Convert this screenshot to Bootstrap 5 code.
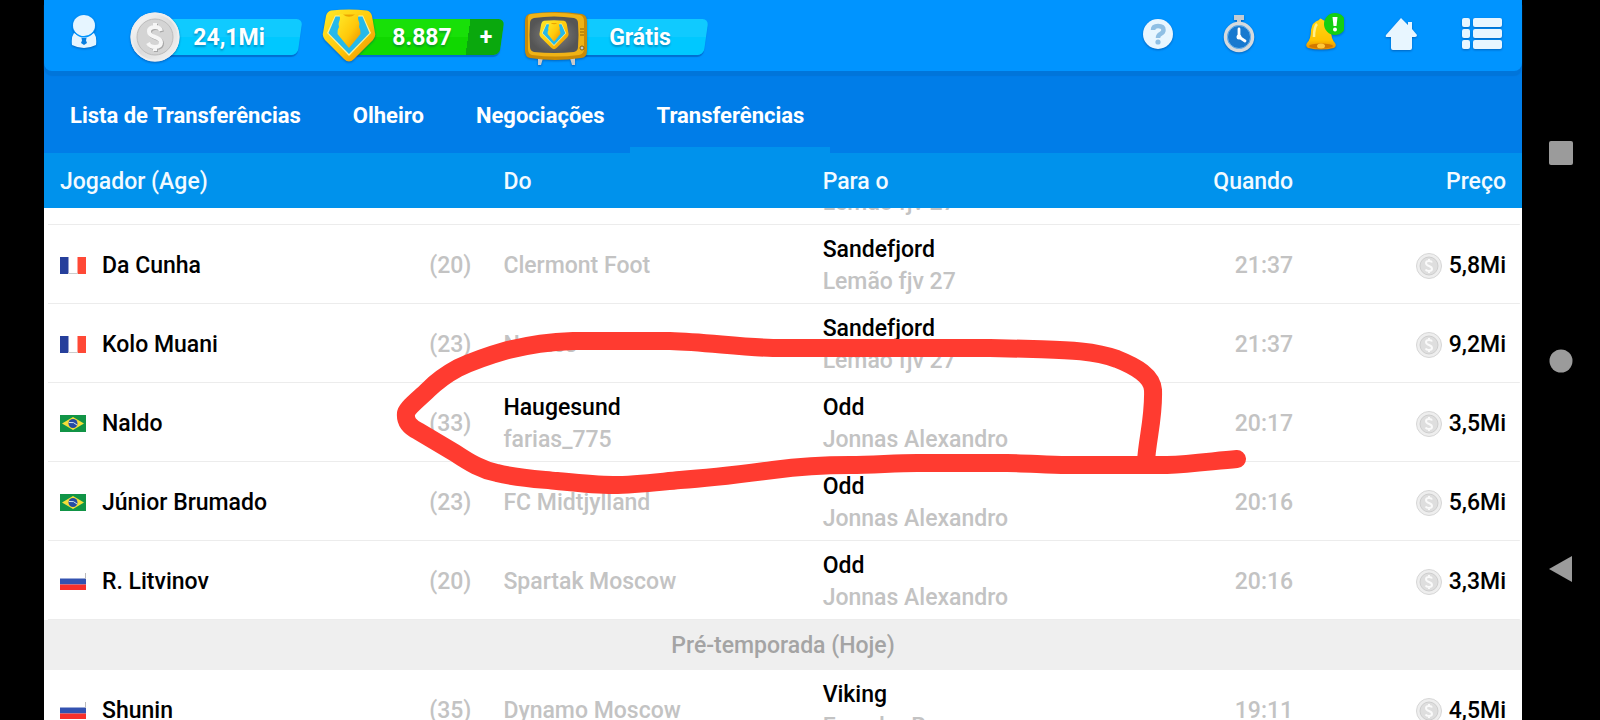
<!DOCTYPE html>
<html lang="pt-BR">
<head>
<meta charset="utf-8">
<meta name="viewport" content="width=device-width, initial-scale=1">
<title>Transferências</title>
<link rel="stylesheet" href="https://cdn.jsdelivr.net/npm/bootstrap@5.3.0/dist/css/bootstrap.min.css">
<style>
  body { font-family: Roboto, "Liberation Sans", sans-serif; font-size: 23px; font-weight: 500; background: #000; color: #000; }
  button { font-family: inherit; }
  .screen { padding-left: 44px; }
  .app { background: #fff; min-width: 0; }
  .tabs-area { background: #007de8; }
  .topbar { height: 71px; background: #0094ff; border-radius: 0 0 8px 8px; box-shadow: 0 5px 1px #0075da; margin-bottom: 6px; padding-left: 27px; }
  .plain { background: none; border: 0; padding: 0; color: inherit; }
  .profile { height: 64px; }
  .topbar svg { display: block; filter: drop-shadow(0 1px 1px rgba(0, 40, 110, .45)); }
  .wallet { gap: 20px; margin-left: 33px; }
  .pill { position: relative; height: 56px; color: #fff; font-weight: 700; text-shadow: 0 2px 2px rgba(0, 50, 100, .35); isolation: isolate; }
  .pill::before { content: ""; position: absolute; z-index: -1; left: 28px; right: 2px; top: 11px; height: 36px; background: var(--fill); border-radius: 0 6px 6px 0; transform: skewX(-8deg); box-shadow: 0 2px 1px rgba(0, 80, 170, .55); }
  .pill-cyan { --fill: linear-gradient(#10caff 50%, #00c8ff 50%); }
  .pill-green { --fill: linear-gradient(90deg, transparent calc(100% - 34px), #0aa80d 0), linear-gradient(#18e008 50%, #10d800 50%); }
  .pill-coins { width: 172px; }
  .pill-crest { width: 182px; }
  .pill-free { width: 184px; }
  .pill-text { flex: 1; text-align: center; line-height: 36px; }
  .pill-plus { width: 36px; line-height: 36px; }
  .tool { width: 81px; height: 68px; display: flex; align-items: center; justify-content: center; }
  .tab-link { display: block; height: 76px; padding: 0 26px; border-bottom: 6px solid transparent; color: #fff; font-size: 22px; font-weight: 700; line-height: 78px; text-decoration: none; }
  .tab-link.active { border-bottom-color: #0092ec; }
  .list-scroll { overflow-y: auto; scrollbar-width: none; min-height: 0; flex: 1 1 0; }
  .list-scroll::-webkit-scrollbar { display: none; }
  .transfers { width: 100%; table-layout: fixed; border-collapse: separate; border-spacing: 0; }
  .transfers th { height: 55px; padding: 4px 16px 0; background: #0092ec; color: #f2faff; font-weight: 500; }
  .transfers td { height: 79px; padding: 2px 16px 0; line-height: 32px; white-space: nowrap; }
  .transfers tbody tr { background: linear-gradient(#ececec, #ececec) 4px 100% / calc(100% - 6px) 1px no-repeat; }
  .transfers tbody tr.season { background: #efefef; }
  .transfers .season td { height: 50px; color: #a4a4a4; text-align: center; }
  .w-player { width: 30%; } .w-from { width: 21.6%; } .w-to { width: 23%; } .w-when { width: 11%; }
  .muted { color: #c3c3c3; }
  .flag { width: 26px; height: 17px; }
  .coin { width: 26px; height: 26px; }
  .price { gap: 7px; }
  .sysbar { width: 78px; padding: 48px 0; }
  .sysbar button { flex: 1; }
  .marker { position: absolute; inset: 0; width: 100%; height: 100%; z-index: 1030; pointer-events: none; }
</style>
</head>
<body>
<svg width="0" height="0" class="position-absolute" aria-hidden="true">
  <defs>
    <linearGradient id="gold" x1="0" y1="0" x2="1" y2="1"><stop offset="0" stop-color="#ffe928"/><stop offset=".55" stop-color="#ffc80a"/><stop offset="1" stop-color="#e88b00"/></linearGradient>
    <linearGradient id="goldV" x1="0" y1="0" x2="0" y2="1"><stop offset="0" stop-color="#ffd815"/><stop offset=".7" stop-color="#ffc200"/><stop offset="1" stop-color="#e58a00"/></linearGradient>
    <linearGradient id="silver" x1="0" y1="0" x2="1" y2="1"><stop offset="0" stop-color="#fff"/><stop offset=".5" stop-color="#dcdcdc"/><stop offset="1" stop-color="#f6f6f6"/></linearGradient>
    <radialGradient id="tube"><stop offset="0" stop-color="#858585"/><stop offset="1" stop-color="#555"/></radialGradient>
  </defs>
  <symbol id="crest" viewBox="0 0 54 54">
    <path d="M9 1.500Q27-.5 45 1.500Q49 2.500 50 7L53 24Q54 27 51 31L32 50Q27 55 22 50L3 31Q0 27 1 24L4 7Q5 2.500 9 1.500Z" fill="url(#gold)"/>
    <path d="M13 6.500H41L49 24L27 47L5 24Z" fill="#fff29a"/>
    <path d="M13.500 7.500H40.500L47.500 24L27 45L6.500 24Z" fill="#25b9ea"/>
    <path d="M17 5H37Q35 9 37 13Q38 15 37 18Q39 21 38.500 25L27 39L15.500 25Q15 21 17 18Q16 15 17 13Q19 9 17 5Z" fill="url(#gold)"/>
    <path d="M21 5.500Q27 10 33 5.500Z" fill="#eda400"/>
  </symbol>
  <symbol id="fr" viewBox="0 0 26 17"><path fill="#fff" d="M0 0h26v17H0z"/><path fill="#263f9b" d="M0 0h8.500v17H0z"/><path fill="#ff4936" d="M17.500 0H26v17h-8.500z"/><path d="M8 16.500h10" stroke="#ccc"/></symbol>
  <symbol id="br" viewBox="0 0 26 17"><path fill="#119446" d="M0 0h26v17H0z"/><path fill="#f4de3a" d="M2 8.500L13 2l11 6.500L13 15z"/><circle cx="13" cy="8.500" r="4.500" fill="#254ba5"/><path d="M9 7.500q5-1 8 2.500" stroke="#cfe3f3" stroke-width="1" fill="none"/></symbol>
  <symbol id="ru" viewBox="0 0 26 17"><path fill="#fff" d="M0 0h26v6H0z"/><path fill="#3352b0" d="M0 5.500h26v6H0z"/><path fill="#f7302b" d="M0 11.500h26V17H0z"/><path d="M25.500 0v6" stroke="#bbb"/></symbol>
  <symbol id="coin" viewBox="0 0 50 50">
    <circle cx="25" cy="25" r="24.500" fill="url(#silver)"/><circle cx="25" cy="25" r="23.500" fill="none" stroke="#eee" stroke-width="2"/>
    <circle cx="25" cy="25" r="18" fill="#d4d4d4" stroke="#bcbcbc"/>
    <path d="M31 19Q30 15 25 15Q19 15 19 19.500Q19 23 25 25Q31 27 31 30.500Q31 35 25 35Q20 35 18 31M25 11v4M25 35v4" fill="none" stroke="#a6a6a6" stroke-width="4" transform="translate(1 1)"/>
    <path d="M31 19Q30 15 25 15Q19 15 19 19.500Q19 23 25 25Q31 27 31 30.500Q31 35 25 35Q20 35 18 31M25 11v4M25 35v4" fill="none" stroke="#f6f6f6" stroke-width="4"/>
  </symbol>
  <symbol id="coin-sm" viewBox="0 0 26 26">
    <circle cx="13" cy="13" r="12.500" fill="#eee" stroke="#d6d6d6"/><circle cx="13" cy="13" r="9" fill="#dedede" stroke="#cecece"/>
    <path d="M16 9.500Q15.500 8 13 8Q10 8 10 10Q10 12 13 13Q16 14 16 16Q16 18 13 18Q10.500 18 9.500 16.500M13 6v2M13 18v2" fill="none" stroke="#fafafa" stroke-width="2"/>
  </symbol>
</svg>

<div class="screen d-flex vh-100 position-relative overflow-hidden">
  <div class="app flex-fill d-flex flex-column">
    <div class="tabs-area">
      <header class="topbar d-flex">
        <button class="plain profile d-flex align-items-center" aria-label="Perfil">
          <svg width="26" height="34" viewBox="0 0 26 34"><path d="M3 18Q0 22 1 30Q13 36 25 30Q26 22 23 18Q13 25 3 18Z" fill="#e6f5ff"/><path d="M10.500 23h5l-.5 2.500 1 2.500-3 2-3-2 1-2.500z" fill="#087ee0"/><ellipse cx="13" cy="11" rx="11.500" ry="11.500" fill="#0094ff"/><ellipse cx="13" cy="10.500" rx="11" ry="10.500" fill="#e6f5ff"/></svg>
        </button>
        <div class="wallet d-flex pt-2">
          <div class="pill pill-cyan pill-coins d-flex">
            <svg class="mt-1" width="50" height="50"><use href="#coin"/></svg>
            <span class="pill-text pe-4 mt-2 pt-1">24,1Mi</span>
          </div>
          <div class="pill pill-green pill-crest d-flex">
            <svg width="54" height="56" viewBox="0 0 54 54"><use href="#crest"/></svg>
            <span class="pill-text mt-2 pt-1">8.887</span>
            <button class="plain pill-plus fw-bold mt-1" aria-label="Comprar">+</button>
          </div>
          <button class="plain pill pill-cyan pill-free d-flex">
            <svg class="mt-1" width="64" height="54" viewBox="0 0 64 54"><path d="M14 46h5l-2 7h-3zM46 46h5v7h-3z" fill="#c9c9c9"/><path d="M5 2Q31-2 58 2Q63 3 63 10V38Q63 46 57 46Q31 50 6 46Q1 45 1 38V10Q1 3 5 2Z" fill="#c98a06"/><path d="M7 2Q31-1 56 3Q60 4 60 9V37Q60 42 55 43Q31 46 8 43Q4 42 4 37V9Q3 3 7 2Z" fill="#f0b316"/><path d="M10 6Q30 3 50 6Q54 7 54 11Q55 23 54 35Q54 39 50 40Q30 42 10 40Q6 39 6 35Q5 23 6 11Q6 7 10 6Z" fill="url(#tube)"/><path d="M56 17h4M56 20h4M56 23h4" stroke="#8d6508" stroke-width="1"/><circle cx="58" cy="36" r="2" fill="#ccc" stroke="#806010"/><use href="#crest" x="15" y="8" width="30" height="30"/></svg>
            <span class="pill-text pe-3 mt-2 pt-1">Grátis</span>
          </button>
        </div>
        <nav class="d-flex ms-auto" aria-label="Ferramentas">
          <button class="plain tool" aria-label="Ajuda"><svg width="32" height="32" viewBox="0 0 32 32"><circle cx="16" cy="16" r="15" fill="#e8f6ff"/><path d="M11 12Q11 8 16 8Q21.500 8 21.500 12Q21.500 14.500 18.500 16Q16 17.300 16 20" stroke="#8fbfe4" stroke-width="4.500" fill="none"/><circle cx="16" cy="24" r="2.600" fill="#8fbfe4"/></svg></button>
          <button class="plain tool" aria-label="Cronômetro"><svg width="32" height="38" viewBox="0 0 32 38"><path d="M11 0h10v5h-3v4h-4V5h-3z" fill="#c3cbd2"/><circle cx="16" cy="22" r="13.500" fill="#1879cf" stroke="#d5dadd" stroke-width="3.500"/><circle cx="16" cy="22" r="11.500" fill="none" stroke="#72b7ee"/><path d="M16 14v8l6 4" stroke="#fff" stroke-width="2.800" fill="none" stroke-linecap="round"/><circle cx="16" cy="22" r="2.500" fill="#fff"/></svg></button>
          <button class="plain tool" aria-label="Notificações"><svg width="48" height="42" viewBox="-3 3 48 42"><path d="M20 10Q21 7 24 10Q31 12 32 20Q32 29 36 33Q38 36 35 38Q22 41 9 38Q6 36 8 33Q12 29 12 20Q13 12 20 10Z" fill="url(#goldV)"/><path d="M18 14Q15 17 15 27" stroke="#fff08a" stroke-width="2.500" fill="none"/><ellipse cx="22" cy="36" rx="12" ry="2.500" fill="#d27800"/><ellipse cx="22" cy="36" rx="4" ry="2.500" fill="#ffc83a"/><circle cx="36" cy="14" r="11" fill="#14cf12"/><path d="M33.500 7h5l-1 9h-3z" fill="#fff"/><circle cx="36" cy="19.500" r="2" fill="#fff"/></svg></button>
          <button class="plain tool" aria-label="Início"><svg width="32" height="34" viewBox="0 0 32 34"><path d="M16 1L23 8V5h4v7l5 6q0 2-2 2h-3v11q0 2-2 2H8q-2 0-2-2V20H2q-2 0-1-2z" fill="#e8f6ff"/></svg></button>
          <button class="plain tool" aria-label="Menu"><svg width="42" height="34" viewBox="0 0 42 34" fill="#e8f6ff"><rect x="1" y="1" width="8" height="9" rx="2"/><rect x="12" y="1" width="29" height="9" rx="2"/><rect x="1" y="12" width="8" height="9" rx="2"/><rect x="12" y="12" width="29" height="9" rx="2"/><rect x="1" y="23" width="8" height="9" rx="2"/><rect x="12" y="23" width="29" height="9" rx="2"/></svg></button>
        </nav>
      </header>
      <nav class="d-flex" aria-label="Seções">
        <a class="tab-link" href="#lista">Lista de Transferências</a>
        <a class="tab-link" href="#olheiro">Olheiro</a>
        <a class="tab-link" href="#negociacoes">Negociações</a>
        <a class="tab-link active" href="#transferencias" aria-current="page">Transferências</a>
      </nav>
    </div>

    <main class="list-scroll" id="transferencias">
      <table class="transfers">
        <colgroup><col class="w-player"><col class="w-from"><col class="w-to"><col class="w-when"><col></colgroup>
        <thead class="sticky-top">
          <tr><th>Jogador (Age)</th><th>Do</th><th>Para o</th><th class="text-end">Quando</th><th class="text-end">Preço</th></tr>
        </thead>
        <tbody>
          <tr><td></td><td></td><td>Sandefjord<div class="muted">Lemão fjv 27</div></td><td></td><td></td></tr>
          <tr><td><div class="d-flex align-items-center gap-3"><svg class="flag"><use href="#fr"/></svg><span>Da Cunha</span><span class="muted ms-auto">(20)</span></div></td><td class="muted">Clermont Foot</td><td>Sandefjord<div class="muted">Lemão fjv 27</div></td><td class="muted text-end">21:37</td><td><div class="price d-flex align-items-center justify-content-end"><svg class="coin"><use href="#coin-sm"/></svg>5,8Mi</div></td></tr>
          <tr><td><div class="d-flex align-items-center gap-3"><svg class="flag"><use href="#fr"/></svg><span>Kolo Muani</span><span class="muted ms-auto">(23)</span></div></td><td class="muted">Nantes</td><td>Sandefjord<div class="muted">Lemão fjv 27</div></td><td class="muted text-end">21:37</td><td><div class="price d-flex align-items-center justify-content-end"><svg class="coin"><use href="#coin-sm"/></svg>9,2Mi</div></td></tr>
          <tr><td><div class="d-flex align-items-center gap-3"><svg class="flag"><use href="#br"/></svg><span>Naldo</span><span class="muted ms-auto">(33)</span></div></td><td>Haugesund<div class="muted">farias_775</div></td><td>Odd<div class="muted">Jonnas Alexandro</div></td><td class="muted text-end">20:17</td><td><div class="price d-flex align-items-center justify-content-end"><svg class="coin"><use href="#coin-sm"/></svg>3,5Mi</div></td></tr>
          <tr><td><div class="d-flex align-items-center gap-3"><svg class="flag"><use href="#br"/></svg><span>Júnior Brumado</span><span class="muted ms-auto">(23)</span></div></td><td class="muted">FC Midtjylland</td><td>Odd<div class="muted">Jonnas Alexandro</div></td><td class="muted text-end">20:16</td><td><div class="price d-flex align-items-center justify-content-end"><svg class="coin"><use href="#coin-sm"/></svg>5,6Mi</div></td></tr>
          <tr><td><div class="d-flex align-items-center gap-3"><svg class="flag"><use href="#ru"/></svg><span>R. Litvinov</span><span class="muted ms-auto">(20)</span></div></td><td class="muted">Spartak Moscow</td><td>Odd<div class="muted">Jonnas Alexandro</div></td><td class="muted text-end">20:16</td><td><div class="price d-flex align-items-center justify-content-end"><svg class="coin"><use href="#coin-sm"/></svg>3,3Mi</div></td></tr>
          <tr class="season"><td colspan="5">Pré-temporada (Hoje)</td></tr>
          <tr><td><div class="d-flex align-items-center gap-3"><svg class="flag"><use href="#ru"/></svg><span>Shunin</span><span class="muted ms-auto">(35)</span></div></td><td class="muted">Dynamo Moscow</td><td>Viking<div class="muted">Evandro R</div></td><td class="muted text-end">19:11</td><td><div class="price d-flex align-items-center justify-content-end"><svg class="coin"><use href="#coin-sm"/></svg>4,5Mi</div></td></tr>
        </tbody>
      </table>
    </main>
  </div>

  <nav class="sysbar d-flex flex-column flex-shrink-0" aria-label="Sistema">
    <button class="plain" aria-label="Recentes"><svg width="24" height="24"><rect width="24" height="24" rx="2" fill="#9b9b9b"/></svg></button>
    <button class="plain" aria-label="Tela inicial"><svg width="24" height="24"><circle cx="12" cy="12" r="11.500" fill="#9b9b9b"/></svg></button>
    <button class="plain" aria-label="Voltar"><svg width="24" height="28"><path d="M0 14L23 1v26z" fill="#9b9b9b"/></svg></button>
  </nav>

  <!-- Hand-drawn marker stroke over the list -->
  <svg class="marker" viewBox="0 0 1600 720" aria-hidden="true">
    <path d="M1146 462C1147 440 1154 418 1153 390C1152 376 1137 367 1117 359C1092 350 1062 350 1033 349L990 348H773C738 347 705 342 670 341H573C548 342 528 345 508 350C487 356 473 361 458 368C445 375 437 381 428 390C420 398 408 407 406 413C405 422 410 427 418 431L455 453C470 463 482 470 497 473C517 478 537 479 557 481C577 483 595 485 613 485C636 485 658 482 680 480C712 478 743 474 773 470C803 466 825 465 850 465C873 465 895 463 917 463H1007C1027 463 1047 465 1067 465H1167C1192 464 1213 461 1237 459" fill="none" stroke="#ff3b30" stroke-width="18" stroke-linecap="round" stroke-linejoin="round"/>
  </svg>
</div>
<script src="https://cdn.jsdelivr.net/npm/bootstrap@5.3.0/dist/js/bootstrap.bundle.min.js"></script>
<script>
  // Open the list just past the first transfer.
  document.getElementById('transferencias').scrollTop = 62;
</script>
</body>
</html>
